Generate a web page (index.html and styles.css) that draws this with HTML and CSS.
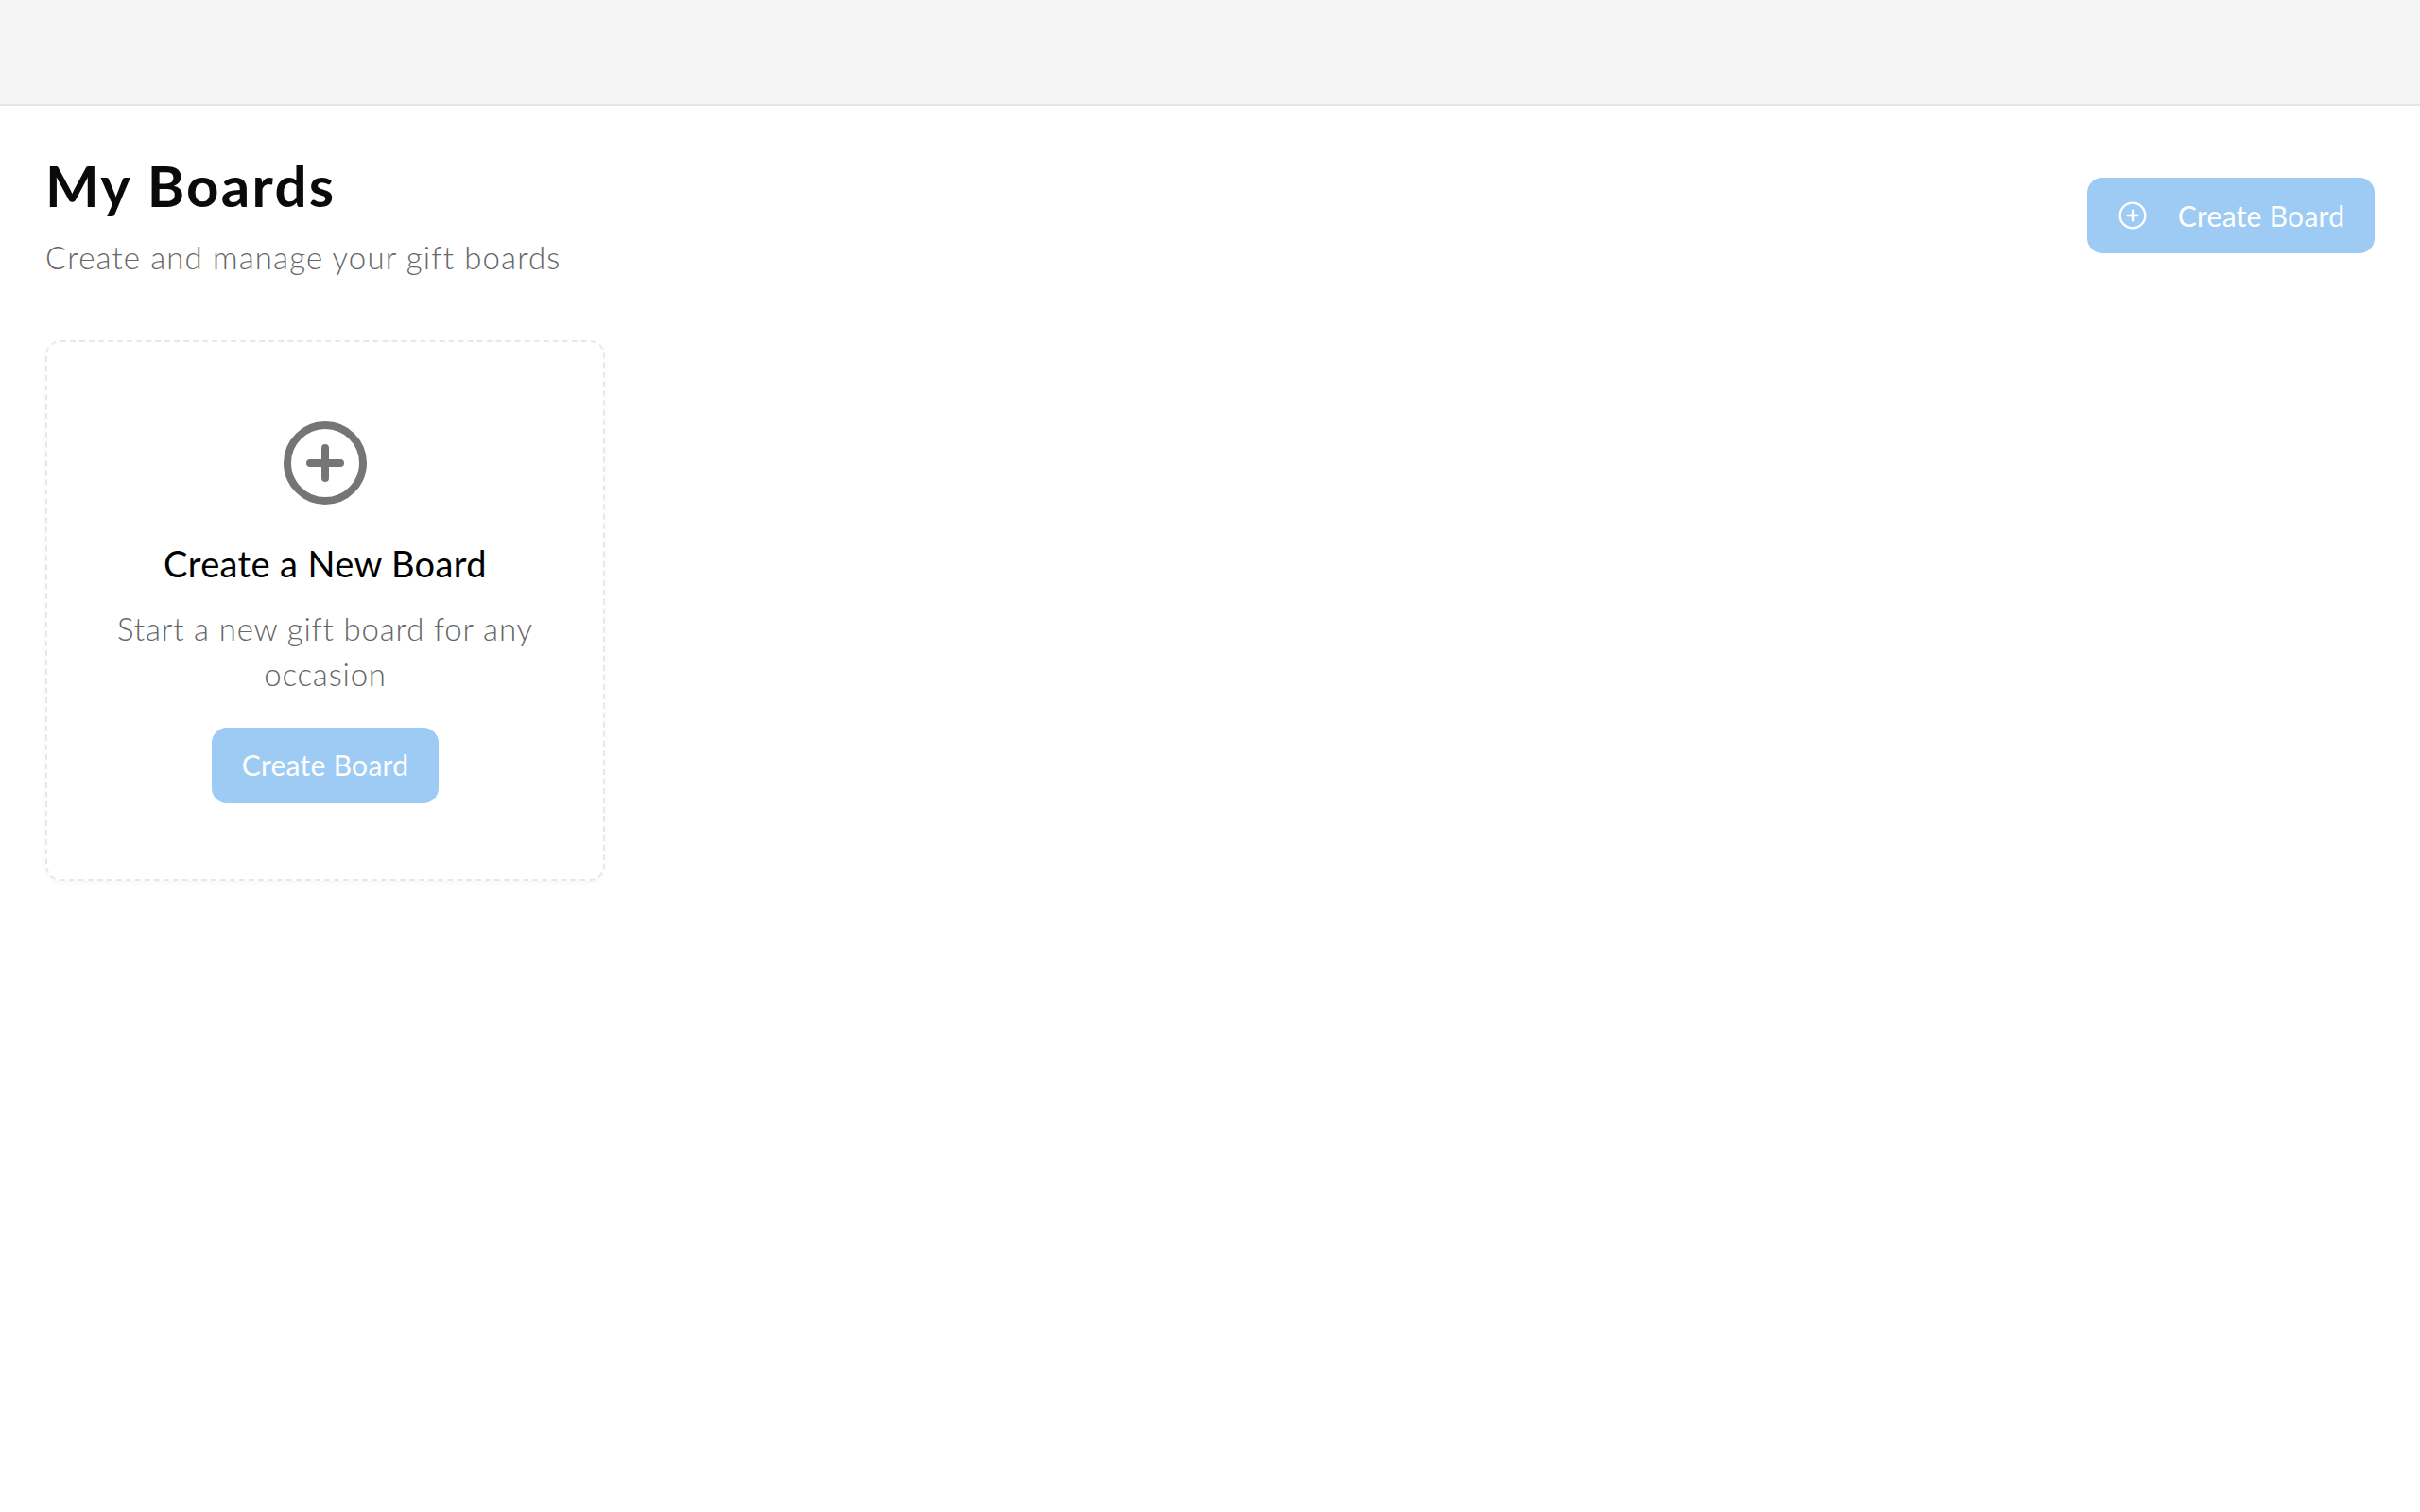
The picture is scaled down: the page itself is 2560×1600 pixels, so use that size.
FILE: index.html
```html
<!DOCTYPE html>
<html lang="en">
<head>
<meta charset="utf-8">
<title>My Boards</title>
<link rel="stylesheet" href="styles.css">
</head>
<body>
<div class="topbar"></div>
<main class="content">
  <header class="page-head">
    <div class="head-text">
      <h1 class="page-title">My Boards</h1>
      <p class="page-sub">Create and manage your gift boards</p>
    </div>
    <button class="btn btn-icon" type="button">
      <svg class="btn-svg" viewBox="0 0 24 24" fill="none" stroke="currentColor" stroke-width="1.75" stroke-linecap="round"><circle cx="12" cy="12" r="10"/><path d="M12 8v8M8 12h8"/></svg>
      <span>Create Board</span>
    </button>
  </header>
  <section class="grid">
    <article class="new-card">
      <svg class="new-svg" viewBox="0 0 24 24" fill="none" stroke="currentColor" stroke-width="2" stroke-linecap="round"><circle cx="12" cy="12" r="10"/><path d="M12 8v8M8 12h8"/></svg>
      <h2 class="new-title">Create a New Board</h2>
      <p class="new-text">Start a new gift board for any occasion</p>
      <button class="btn btn-plain" type="button">Create Board</button>
    </article>
  </section>
</main>
</body>
</html>
```
FILE: styles.css
```css
* { box-sizing: border-box; }
html, body { margin: 0; padding: 0; background: #fff; }
body { font-family: "Lato", "Open Sans", sans-serif; color: #0a0a0a; min-height: 1600px; }
.topbar { height: 112px; background: #f5f5f5; border-bottom: 2px solid #e5e5e5; }
.content { padding: 48px 48px 0; }
.page-head { display: flex; justify-content: space-between; align-items: center; margin-bottom: 64px; }
.page-title { margin: 0 0 16px; font-size: 60px; line-height: 72px; font-weight: 700; letter-spacing: 2.3px; }
.page-sub { margin: 0; font-size: 33px; line-height: 48px; font-weight: 300; color: #666; letter-spacing: 1.13px; }
.btn { display: inline-flex; align-items: center; justify-content: center; height: 80px; border: 0; border-radius: 16px; background: #9dcbf4; color: #fff; font-family: inherit; font-size: 30px; font-weight: 400; padding: 0 32px; letter-spacing: .28px; white-space: nowrap; }
.btn-icon { gap: 32px; width: 304px; }
.btn-svg { width: 32px; height: 32px; flex: none; }
.grid { display: grid; grid-template-columns: 592px; }
.new-card { height: 572px; border: 2px dashed #e8e8e8; border-radius: 16px; box-shadow: 0 2px 4px rgba(0, 0, 0, .03); padding: 80px 48px; display: flex; flex-direction: column; align-items: center; text-align: center; }
.new-svg { width: 96px; height: 96px; color: #757575; flex: none; }
.new-title { margin: 30px 0 17px; font-size: 38px; line-height: 56px; font-weight: 400; color: #000; letter-spacing: .37px; }
.new-text { margin: 0 0 33px; font-size: 33px; line-height: 48px; font-weight: 300; color: #666; letter-spacing: .82px; }
.btn-plain { width: 240px; flex: none; padding: 0 0 2px; }
```
